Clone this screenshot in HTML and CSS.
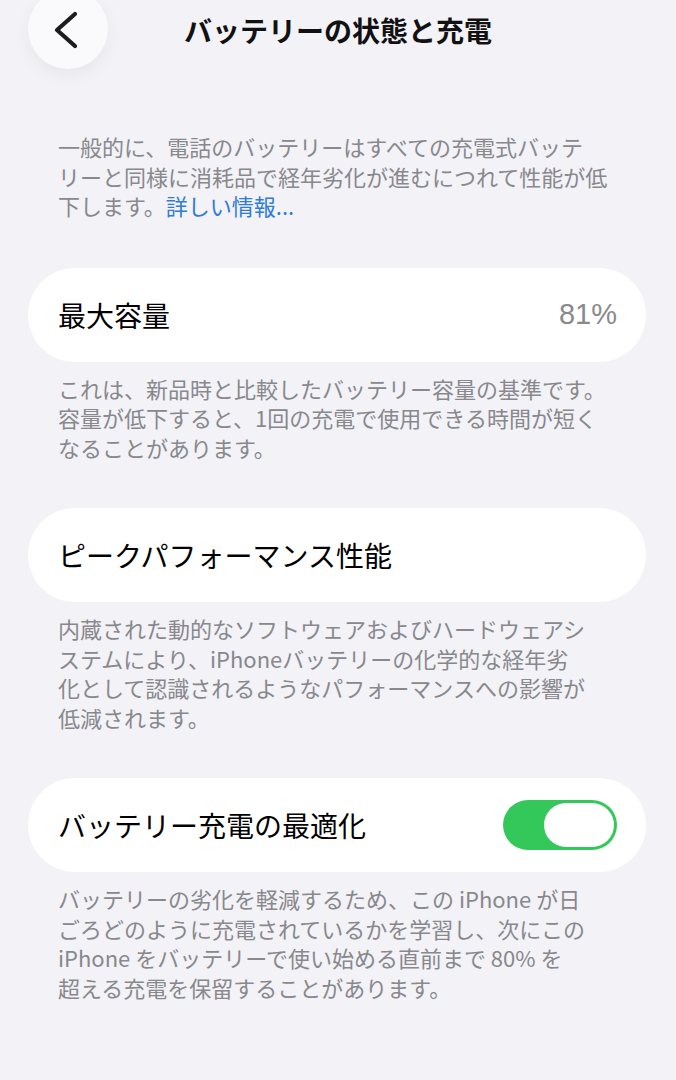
FILE: index.html
```html
<!DOCTYPE html>
<html lang="ja">
<head>
<meta charset="utf-8">
<title>バッテリーの状態と充電</title>
<link rel="stylesheet" href="styles.css">
</head>
<body>
<div class="screen">
  <header class="nav">
    <button class="back" aria-label="戻る">
      <svg width="80" height="80" viewBox="0 0 80 80"><path d="M47 25 L29 41 L47 57" fill="none" stroke="#1c1c1e" stroke-width="4.2" stroke-linecap="round" stroke-linejoin="round"/></svg>
    </button>
    <h1 class="title">バッテリーの状態と充電</h1>
  </header>

  <p class="note intro">一般的に、電話のバッテリーはすべての充電式バッテ<br>リーと同様に消耗品で経年劣化が進むにつれて性能が低<br>下します。<span class="link">詳しい情報...</span></p>

  <section class="group">
    <div class="card">
      <span class="label">最大容量</span>
      <span class="value">81%</span>
    </div>
    <p class="note">これは、新品時と比較したバッテリー容量の基準です。<br>容量が低下すると、1回の充電で使用できる時間が短く<br>なることがあります。</p>
  </section>

  <section class="group">
    <div class="card">
      <span class="label">ピークパフォーマンス性能</span>
    </div>
    <p class="note">内蔵された動的なソフトウェアおよびハードウェアシ<br>ステムにより、iPhoneバッテリーの化学的な経年劣<br>化として認識されるようなパフォーマンスへの影響が<br>低減されます。</p>
  </section>

  <section class="group">
    <div class="card">
      <span class="label">バッテリー充電の最適化</span>
      <span class="toggle"><span class="knob"></span></span>
    </div>
    <p class="note">バッテリーの劣化を軽減するため、この iPhone が日<br>ごろどのように充電されているかを学習し、次にこの<br>iPhone をバッテリーで使い始める直前まで 80% を<br>超える充電を保留することがあります。</p>
  </section>
</div>
</body>
</html>
```

FILE: styles.css
```css
* { box-sizing: border-box; }
html, body {
  margin: 0;
  padding: 0;
  background: #f2f2f7;
}
body {
  font-family: "Noto Sans CJK JP", "Noto Sans", sans-serif;
  color: #000;
  width: 676px;
  height: 1080px;
  overflow: hidden;
}
.screen {
  display: flex;
  flex-direction: column;
  padding: 0 30px 0 28px;
}
.nav {
  position: relative;
  height: 60px;
  margin: 0 -30px 0 -28px;
}
.back {
  position: absolute;
  left: 28px;
  top: -11px;
  width: 80px;
  height: 80px;
  border-radius: 50%;
  border: 0;
  padding: 0;
  background: #fafafc;
  box-shadow: 0 6px 18px rgba(0,0,0,0.05);
  display: flex;
  align-items: center;
  justify-content: center;
}
.back svg { display: block; }
.title {
  margin: 0;
  text-align: center;
  font-size: 28px;
  font-weight: 700;
  line-height: 60px;
  color: #111;
}
.note {
  margin: 0;
  padding: 0 10px 0 30px;
  font-size: 22px;
  line-height: 29.5px;
  color: #88888d;
  white-space: nowrap;
}
.intro {
  margin-top: 72px;
  margin-bottom: 1px;
}
.link { color: #2f7bd6; }
.group {
  margin-top: 46px;
  display: flex;
  flex-direction: column;
}
.card {
  height: 94px;
  border-radius: 47px;
  background: #fff;
  display: flex;
  align-items: center;
  justify-content: space-between;
  padding: 0 29px 0 30px;
}
.group .note { margin-top: 12px; }
.label {
  font-size: 28px;
  color: #000;
}
.value {
  font-size: 29px;
  color: #8a8a8e;
  font-family: "Liberation Sans", sans-serif;
}
.toggle {
  width: 114px;
  height: 50px;
  border-radius: 25px;
  background: #34c759;
  display: flex;
  align-items: center;
  justify-content: flex-end;
  padding: 0 3px;
}
.knob {
  width: 70px;
  height: 44px;
  border-radius: 22px;
  background: #fff;
}
```
